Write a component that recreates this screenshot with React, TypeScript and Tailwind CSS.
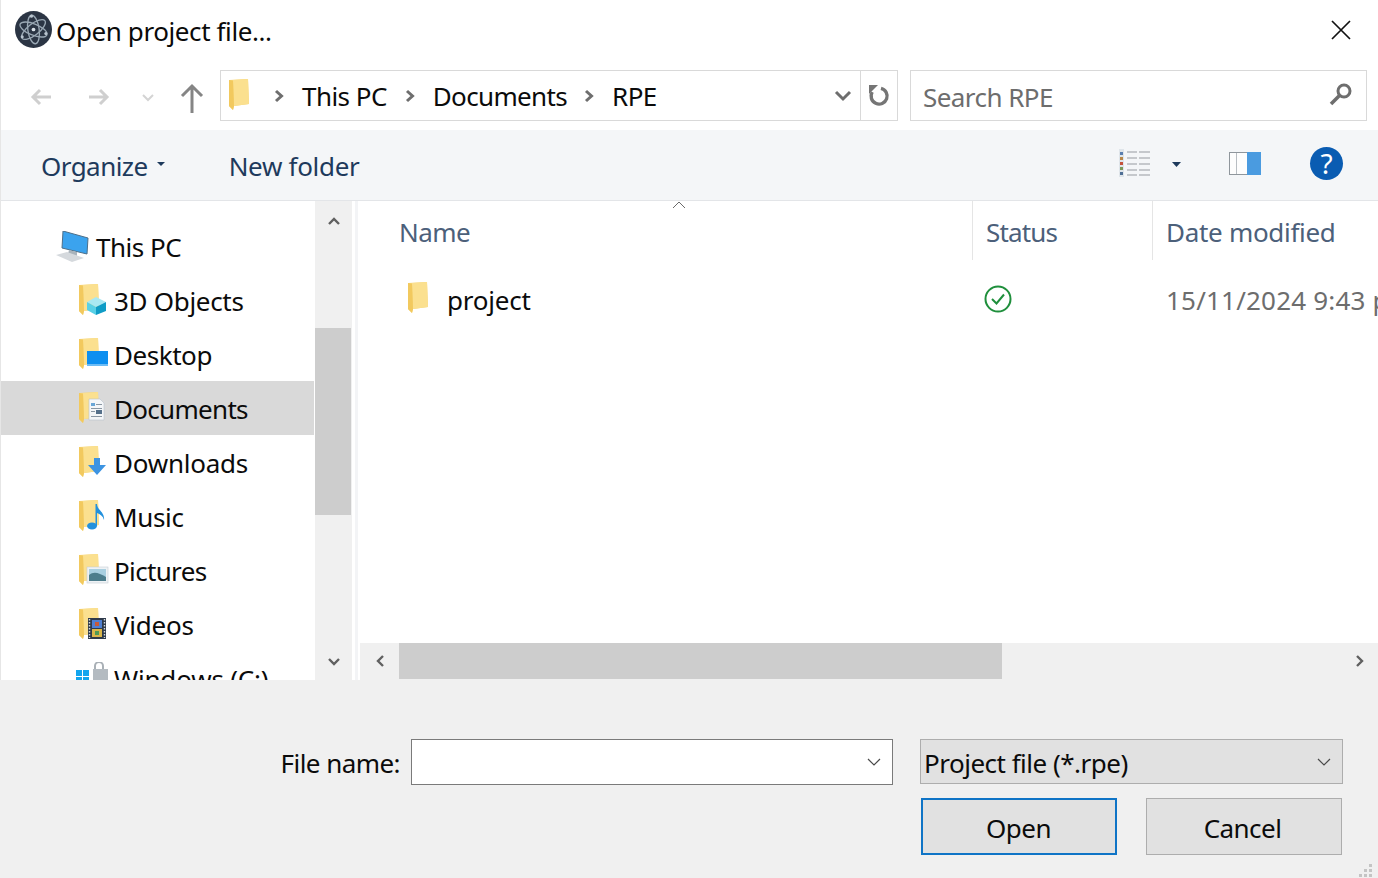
import React from "react";

const font = { fontFamily: '"Noto Sans", "Open Sans", sans-serif' };

function FolderBase() {
  return (
    <>
      <path d="M0 1 L19 0 L20 25 L5 27 L4 31 L0 27 Z" fill="#f6d574" />
      <path d="M4 1 L19 0 L20 25 L5 27 Z" fill="#fbe08f" />
      <path d="M0 1 L4 2 L5 27 L4 31 L0 27 Z" fill="#f2c95e" />
    </>
  );
}

function Folder({ className }: { className: string }) {
  return (
    <svg viewBox="0 0 21 32" className={className}>
      <FolderBase />
    </svg>
  );
}

function NavIcon({ name }: { name: string }) {
  let overlay: React.ReactNode = null;
  if (name === "3D Objects")
    overlay = (
      <>
        <path d="M8 18 L17 13 L27 18 L17 23 Z" fill="#a9e8f2" />
        <path d="M8 18 L17 23 L17 31 L8 26 Z" fill="#59d0e6" />
        <path d="M17 23 L27 18 L27 27 L17 31 Z" fill="#0f9cc6" />
      </>
    );
  if (name === "Desktop")
    overlay = (
      <>
        <rect x="8" y="13" width="21" height="15" fill="#0d8ff0" />
        <rect x="8" y="26" width="21" height="2" fill="#6cbcf5" />
      </>
    );
  if (name === "Documents")
    overlay = (
      <>
        <path d="M10 7 L21 7 L25 11 L25 28 L10 28 Z" fill="#f4f6f8" stroke="#b9c2cc" strokeWidth="0.6" />
        <rect x="12" y="11" width="4" height="3" fill="#6aa6d6" />
        <rect x="17" y="12" width="6" height="1" fill="#8a97a3" />
        <rect x="12" y="16" width="11" height="1" fill="#8a97a3" />
        <rect x="17" y="18" width="6" height="4" fill="#55708a" />
        <rect x="12" y="19" width="4" height="1" fill="#8a97a3" />
        <rect x="12" y="24" width="11" height="1" fill="#8a97a3" />
      </>
    );
  if (name === "Downloads")
    overlay = <path d="M15 12 L21 12 L21 19 L27 19 L18 29 L9 19 L15 19 Z" fill="#3d94e2" />;
  if (name === "Music")
    overlay = (
      <>
        <ellipse cx="13" cy="26" rx="5" ry="3.5" fill="#2391dd" />
        <path d="M16.5 26 L16.5 4 L18 4 C18 10 26 12 25 20 C24 16 21 14 18 13 L18 26 Z" fill="#2391dd" />
      </>
    );
  if (name === "Pictures")
    overlay = (
      <>
        <rect x="8" y="13" width="21" height="16" fill="#eef2f5" stroke="#c5ccd3" strokeWidth="0.6" />
        <rect x="10" y="15" width="17" height="12" fill="#a9cfe0" />
        <path d="M10 21 C15 17 20 19 27 23 L27 27 L10 27 Z" fill="#4d7d8c" />
      </>
    );
  if (name === "Videos")
    overlay = (
      <>
        <rect x="9" y="10" width="18" height="21" fill="#2e3a4a" />
        <rect x="13" y="12" width="10" height="8" fill="#4f7fd0" />
        <rect x="13" y="21" width="10" height="8" fill="#d9b64a" />
        <rect x="16" y="14" width="4" height="4" fill="#c65a3a" />
        <rect x="16" y="23" width="4" height="4" fill="#4f9a55" />
        <path d="M10.5 11 V30 M25.5 11 V30" stroke="#d5dbe1" strokeWidth="1.4" strokeDasharray="1.5 1.5" />
      </>
    );
  return (
    <svg viewBox="0 0 30 32" className="w-[30px] h-[32px] shrink-0">
      <FolderBase />
      {overlay}
    </svg>
  );
}

function Sep() {
  return (
    <svg viewBox="0 0 12 14" className="w-[12px] h-[14px] shrink-0">
      <path d="M3 2 L8.5 7 L3 12" fill="none" stroke="#6e6e6e" strokeWidth="3" />
    </svg>
  );
}

function NavRow({ name, selected, tracking }: { name: string; selected?: boolean; tracking: string }) {
  return (
    <div className={`h-[54px] mr-[1px] flex items-center pl-[78px] shrink-0 ${selected ? "bg-[#d9d9d9]" : ""}`}>
      <NavIcon name={name} />
      <span className={`ml-[5px] mt-[2px] text-[26px] text-[#0b0b0b] whitespace-nowrap ${tracking}`}>{name}</span>
    </div>
  );
}

export default function App() {
  return (
    <div className="w-[1378px] h-[878px] overflow-hidden bg-white flex flex-col" style={font}>
      <div className="border-l border-[#e6e6e6] flex flex-col shrink-0">
        {/* Title */}
        <div className="h-[70px] flex items-start pl-[14px] pr-[26px]">
          <svg viewBox="0 0 36 36" className="w-[37px] h-[37px] mt-[11px] shrink-0">
            <circle cx="18" cy="18" r="18" fill="#2b3544" />
            <g fill="none" stroke="#9aa8b4" strokeWidth="1.3" transform="rotate(-8 18 18)">
              <ellipse cx="18" cy="18" rx="14" ry="5.5" transform="rotate(30 18 18)" />
              <ellipse cx="18" cy="18" rx="14" ry="5.5" transform="rotate(90 18 18)" />
              <ellipse cx="18" cy="18" rx="14" ry="5.5" transform="rotate(150 18 18)" />
            </g>
            <circle cx="18" cy="18" r="1.8" fill="#d9e1e8" />
            <circle cx="16" cy="5" r="1.5" fill="#b9c4ce" />
            <circle cx="7" cy="25" r="1.5" fill="#b9c4ce" />
            <circle cx="30" cy="22" r="1.5" fill="#b9c4ce" />
          </svg>
          <span className="ml-[4px] mt-[12px] text-[26px] leading-[38px] tracking-[-0.4px] text-[#0a0a0a]">Open project file...</span>
          <svg viewBox="0 0 20 20" className="w-[20px] h-[20px] ml-auto mt-[20px] mr-[1px] shrink-0">
            <path d="M1 1 L19 19 M19 1 L1 19" stroke="#111" strokeWidth="1.7" fill="none" />
          </svg>
        </div>

        {/* Navigation */}
        <div className="h-[60px] flex items-start">
          <div className="w-[219px] h-[51px] flex items-center shrink-0">
            <svg viewBox="0 0 22 18" className="w-[22px] h-[18px] ml-[29px] mt-[2px]">
              <path d="M21 9 H3 M10 2 L3 9 L10 16" fill="none" stroke="#cfcfcf" strokeWidth="3" />
            </svg>
            <svg viewBox="0 0 22 18" className="w-[22px] h-[18px] ml-[36px] mt-[2px]">
              <path d="M1 9 H19 M12 2 L19 9 L12 16" fill="none" stroke="#cfcfcf" strokeWidth="3" />
            </svg>
            <svg viewBox="0 0 12 8" className="w-[12px] h-[8px] ml-[32px] mt-[4px]">
              <path d="M1 1 L6 6 L11 1" fill="none" stroke="#d4d4d4" strokeWidth="2" />
            </svg>
            <svg viewBox="0 0 24 30" className="w-[24px] h-[30px] ml-[26px] mt-[4px]">
              <path d="M12 30 V3 M2 13 L12 3 L22 13" fill="none" stroke="#858585" strokeWidth="3" />
            </svg>
          </div>
          <div className="w-[678px] h-[51px] border border-[#d9d9d9] flex items-center shrink-0">
            <Folder className="w-[21px] h-[32px] ml-[8px] shrink-0 -mt-[2px]" />
            <div className="ml-[23px]"><Sep /></div>
            <span className="ml-[17px] mt-[2px] text-[26px] tracking-[-0.55px] text-[#0b0b0b] whitespace-nowrap">This PC</span>
            <div className="ml-[17px]"><Sep /></div>
            <span className="ml-[17px] mt-[2px] text-[26px] tracking-[-0.65px] text-[#0b0b0b] whitespace-nowrap">Documents</span>
            <div className="ml-[16px]"><Sep /></div>
            <span className="ml-[17px] mt-[2px] text-[26px] tracking-[-0.55px] text-[#0b0b0b] whitespace-nowrap">RPE</span>
            <svg viewBox="0 0 18 12" className="w-[18px] h-[12px] ml-auto mr-[8px] shrink-0">
              <path d="M2 2 L9 9 L16 2" fill="none" stroke="#6e6e6e" strokeWidth="3" />
            </svg>
            <div className="w-[37px] h-full border-l border-[#d9d9d9] flex items-center justify-center shrink-0">
              <svg viewBox="0 0 24 24" className="w-[24px] h-[24px]">
                <path d="M14 4.3 A8 8 0 1 1 5.2 8" fill="none" stroke="#757575" strokeWidth="3.4" />
                <path d="M2 1 L11 1 L2 10 Z" fill="#757575" />
              </svg>
            </div>
          </div>
          <div className="w-[457px] h-[51px] ml-[12px] border border-[#d9d9d9] flex items-center pl-[12px] pr-[13px] shrink-0">
            <span className="mt-[3px] text-[26px] tracking-[-0.55px] text-[#6d6d6d] whitespace-nowrap">Search RPE</span>
            <svg viewBox="0 0 24 24" className="w-[24px] h-[24px] ml-auto -mt-[4px]">
              <circle cx="15" cy="9" r="6" fill="none" stroke="#6e6e6e" strokeWidth="3" />
              <path d="M10.5 13.5 L2 22" stroke="#6e6e6e" strokeWidth="3.6" />
            </svg>
          </div>
        </div>

        {/* Toolbar */}
        <div className="h-[71px] bg-[#f4f6f8] border-b border-[#e3e5e8] flex items-center pl-[40px] text-[#1e3a5c] text-[26px]">
          <span className="whitespace-nowrap mt-[2px] tracking-[-0.55px]">Organize</span>
          <svg viewBox="0 0 8 4" className="w-[8px] h-[4px] ml-[9px] -mt-[3px]"><path d="M0 0 H8 L4 4 Z" fill="#1e3a5c" /></svg>
          <span className="whitespace-nowrap ml-[64px] mt-[2px] tracking-[-0.3px]">New folder</span>
          <svg viewBox="0 0 31 28" className="w-[31px] h-[28px] ml-auto -mt-[4px]">
            <rect x="0" y="0" width="5" height="28" fill="#dfe5ea" />
            <rect x="1" y="3" width="3" height="3" fill="#5a7fb0" />
            <rect x="1" y="8" width="3" height="3" fill="#b9884a" />
            <rect x="1" y="13" width="3" height="3" fill="#c5523a" />
            <rect x="1" y="18" width="3" height="3" fill="#7a9a5a" />
            <rect x="1" y="23" width="3" height="3" fill="#4f6f95" />
            <path d="M8 3 H18 M20 3 H31 M8 9 H18 M20 9 H31 M8 15 H18 M20 15 H31 M8 21 H18 M20 21 H31 M8 26 H18 M20 26 H31" stroke="#b5b9bd" strokeWidth="1.6" />
          </svg>
          <svg viewBox="0 0 9 5" className="w-[9px] h-[5px] ml-[22px] -mt-[2px]"><path d="M0 0 H9 L4.5 5 Z" fill="#1e3a5c" /></svg>
          <svg viewBox="0 0 32 23" className="w-[32px] h-[23px] ml-[48px] -mt-[4px]">
            <rect x="0.5" y="0.5" width="31" height="22" fill="#fdfdfd" stroke="#8f969c" />
            <rect x="7" y="1" width="1" height="21" fill="#b8bdc2" />
            <rect x="18" y="0" width="14" height="23" fill="#4a9be0" />
          </svg>
          <div className="w-[33px] h-[33px] rounded-full bg-[#0a5cb2] flex items-center justify-center text-white text-[28px] font-normal ml-[49px] mr-[35px] -mt-[4px] leading-none">?</div>
        </div>

        {/* Main */}
        <div className="h-[479px] flex">
          <div className="w-[314px] overflow-hidden flex flex-col pt-[18px] shrink-0">
            <div className="h-[54px] flex items-center pl-[54px] shrink-0">
              <svg viewBox="0 0 34 31" className="w-[34px] h-[31px] shrink-0">
                <path d="M8 0 L33 7 L32 23 L7 17 Z" fill="#3ba3ee" stroke="#4e6f88" strokeWidth="1" />
                <path d="M14 19 L22 21 L22 25 L13 23 Z" fill="#a9b3bb" />
                <path d="M1 24 L12 21 L29 27 L17 31 Z" fill="#d5d9dd" />
              </svg>
              <span className="ml-[7px] mt-[2px] text-[26px] tracking-[-0.5px] text-[#0b0b0b] whitespace-nowrap">This PC</span>
            </div>
            <NavRow name="3D Objects" tracking="tracking-[-0.3px]" />
            <NavRow name="Desktop" tracking="tracking-[-0.45px]" />
            <NavRow name="Documents" selected tracking="tracking-[-0.7px]" />
            <NavRow name="Downloads" tracking="tracking-[-0.25px]" />
            <NavRow name="Music" tracking="tracking-[-0.35px]" />
            <NavRow name="Pictures" tracking="tracking-[-0.65px]" />
            <NavRow name="Videos" tracking="tracking-[-0.25px]" />
            <div className="h-[54px] flex items-center pl-[74px] shrink-0">
              <svg viewBox="0 0 34 32" className="w-[34px] h-[32px] shrink-0">
                <path d="M1 8 H7 V14 H1 Z M8 8 H14 V14 H8 Z M1 15 H7 V21 H1 Z M8 15 H14 V21 H8 Z" fill="#12a5ee" />
                <path d="M20 7 V4 A4 4 0 0 1 28 4 V7" fill="none" stroke="#a9b0b6" strokeWidth="2" />
                <rect x="18" y="7" width="15" height="18" fill="#b4bbc1" />
              </svg>
              <span className="ml-[5px] mt-[2px] text-[26px] tracking-[-0.2px] text-[#0b0b0b] whitespace-nowrap">Windows (C:)</span>
            </div>
          </div>

          {/* Vertical scrollbar */}
          <div className="w-[37px] bg-[#f0f0f0] flex flex-col items-center shrink-0">
            <div className="h-[127px] w-full flex items-start justify-center pt-[16px]">
              <svg viewBox="0 0 12 8" className="w-[12px] h-[8px]"><path d="M1 7 L6 2 L11 7" fill="none" stroke="#606060" strokeWidth="2.4" /></svg>
            </div>
            <div className="h-[187px] w-[36px] bg-[#cdcdcd] self-start" />
            <div className="flex-1 w-full flex items-end justify-center pb-[14px]">
              <svg viewBox="0 0 12 8" className="w-[12px] h-[8px]"><path d="M1 1 L6 6 L11 1" fill="none" stroke="#606060" strokeWidth="2.4" /></svg>
            </div>
          </div>
          <div className="w-[8px] pl-[3px] pr-[2px] shrink-0">
            <div className="h-full bg-[#f3f4f6]" />
          </div>

          {/* Files */}
          <div className="flex-1 min-w-0 flex flex-col overflow-hidden">
            <div className="h-[59px] flex shrink-0 text-[#4c607a] text-[26px]">
              <div className="w-[612px] shrink-0 pl-[39px] flex items-start">
                <span className="mt-[12px] whitespace-nowrap tracking-[-0.55px]">Name</span>
                <svg viewBox="0 0 14 8" className="w-[14px] h-[8px] ml-[202px] shrink-0 mt-[0px]">
                  <path d="M1 7 L7 1 L13 7" fill="none" stroke="#6a6a6a" strokeWidth="1" />
                </svg>
              </div>
              <div className="w-[180px] shrink-0 border-l border-[#e5e5e5] pl-[13px]">
                <span className="block mt-[12px] whitespace-nowrap tracking-[-0.85px]">Status</span>
              </div>
              <div className="flex-1 border-l border-[#e5e5e5] pl-[13px]">
                <span className="block mt-[12px] whitespace-nowrap tracking-[-0.3px]">Date modified</span>
              </div>
            </div>
            <div className="h-[383px] flex items-start shrink-0 text-[26px]">
              <div className="w-[612px] shrink-0 pl-[48px] flex items-start">
                <Folder className="w-[21px] h-[32px] mt-[22px] shrink-0" />
                <span className="ml-[18px] mt-[21px] text-[#0b0b0b] whitespace-nowrap tracking-[-0.2px]">project</span>
              </div>
              <div className="w-[180px] shrink-0 pl-[12px]">
                <svg viewBox="0 0 28 28" className="w-[28px] h-[28px] mt-[25px]">
                  <circle cx="14" cy="14" r="12.5" fill="none" stroke="#1f8f3c" strokeWidth="2" />
                  <path d="M8 14 L12.5 18.5 L20 9.5" fill="none" stroke="#1f8f3c" strokeWidth="2" />
                </svg>
              </div>
              <span className="ml-[14px] mt-[21px] text-[#6d6d6d] whitespace-nowrap tracking-[0.2px]">15/11/2024 9:43 pm</span>
            </div>
            <div className="h-[37px] bg-[#f0f0f0] flex items-start shrink-0">
              <div className="w-[39px] h-[36px] flex items-center justify-center shrink-0">
                <svg viewBox="0 0 8 12" className="w-[8px] h-[12px]"><path d="M7 1 L2 6 L7 11" fill="none" stroke="#606060" strokeWidth="2.4" /></svg>
              </div>
              <div className="w-[603px] h-[36px] bg-[#cdcdcd] shrink-0" />
              <div className="flex-1 h-[36px] flex items-center justify-end pr-[14px]">
                <svg viewBox="0 0 8 12" className="w-[8px] h-[12px]"><path d="M1 1 L6 6 L1 11" fill="none" stroke="#606060" strokeWidth="2.4" /></svg>
              </div>
            </div>
          </div>
        </div>
      </div>

      {/* Bottom */}
      <div className="flex-1 bg-[#f0f0f0] pt-[59px] flex flex-col text-[26px] tracking-[-0.55px] text-[#0b0b0b]">
        <div className="flex h-[46px] items-start">
          <span className="w-[400px] text-right pt-[3px] whitespace-nowrap leading-[42px]">File name:</span>
          <div className="w-[482px] h-[46px] ml-[11px] bg-white border border-[#7a7a7a] flex items-center justify-end pr-[11px] shrink-0">
            <svg viewBox="0 0 14 8" className="w-[14px] h-[8px]"><path d="M1 1 L7 7 L13 1" fill="none" stroke="#4a4a4a" strokeWidth="1.2" /></svg>
          </div>
          <div className="w-[423px] h-[45px] ml-[27px] bg-[#e1e1e1] border border-[#adadad] flex items-center pl-[3px] pr-[11px] shrink-0">
            <span className="whitespace-nowrap mt-[3px] tracking-[-0.5px]">Project file (*.rpe)</span>
            <svg viewBox="0 0 14 8" className="w-[14px] h-[8px] ml-auto"><path d="M1 1 L7 7 L13 1" fill="none" stroke="#4a4a4a" strokeWidth="1.2" /></svg>
          </div>
        </div>
        <div className="flex mt-[13px] pl-[921px]">
          <div className="w-[196px] h-[57px] bg-[#e1e1e1] border-2 border-[#0f74c6] flex items-center justify-center pt-[3px] pr-[1px]">Open</div>
          <div className="w-[196px] h-[57px] ml-[29px] bg-[#e1e1e1] border border-[#adadad] flex items-center justify-center pt-[3px] pr-[3px]">Cancel</div>
        </div>
        <div className="flex justify-end pr-[5px] mt-[8px]">
          <svg viewBox="0 0 14 14" className="w-[14px] h-[14px]">
            <path d="M10 1 h3 v3 h-3 z M5 6 h3 v3 h-3 z M10 6 h3 v3 h-3 z M0 11 h3 v3 h-3 z M5 11 h3 v3 h-3 z M10 11 h3 v3 h-3 z" fill="#c4c4c4" />
          </svg>
        </div>
      </div>
    </div>
  );
}
